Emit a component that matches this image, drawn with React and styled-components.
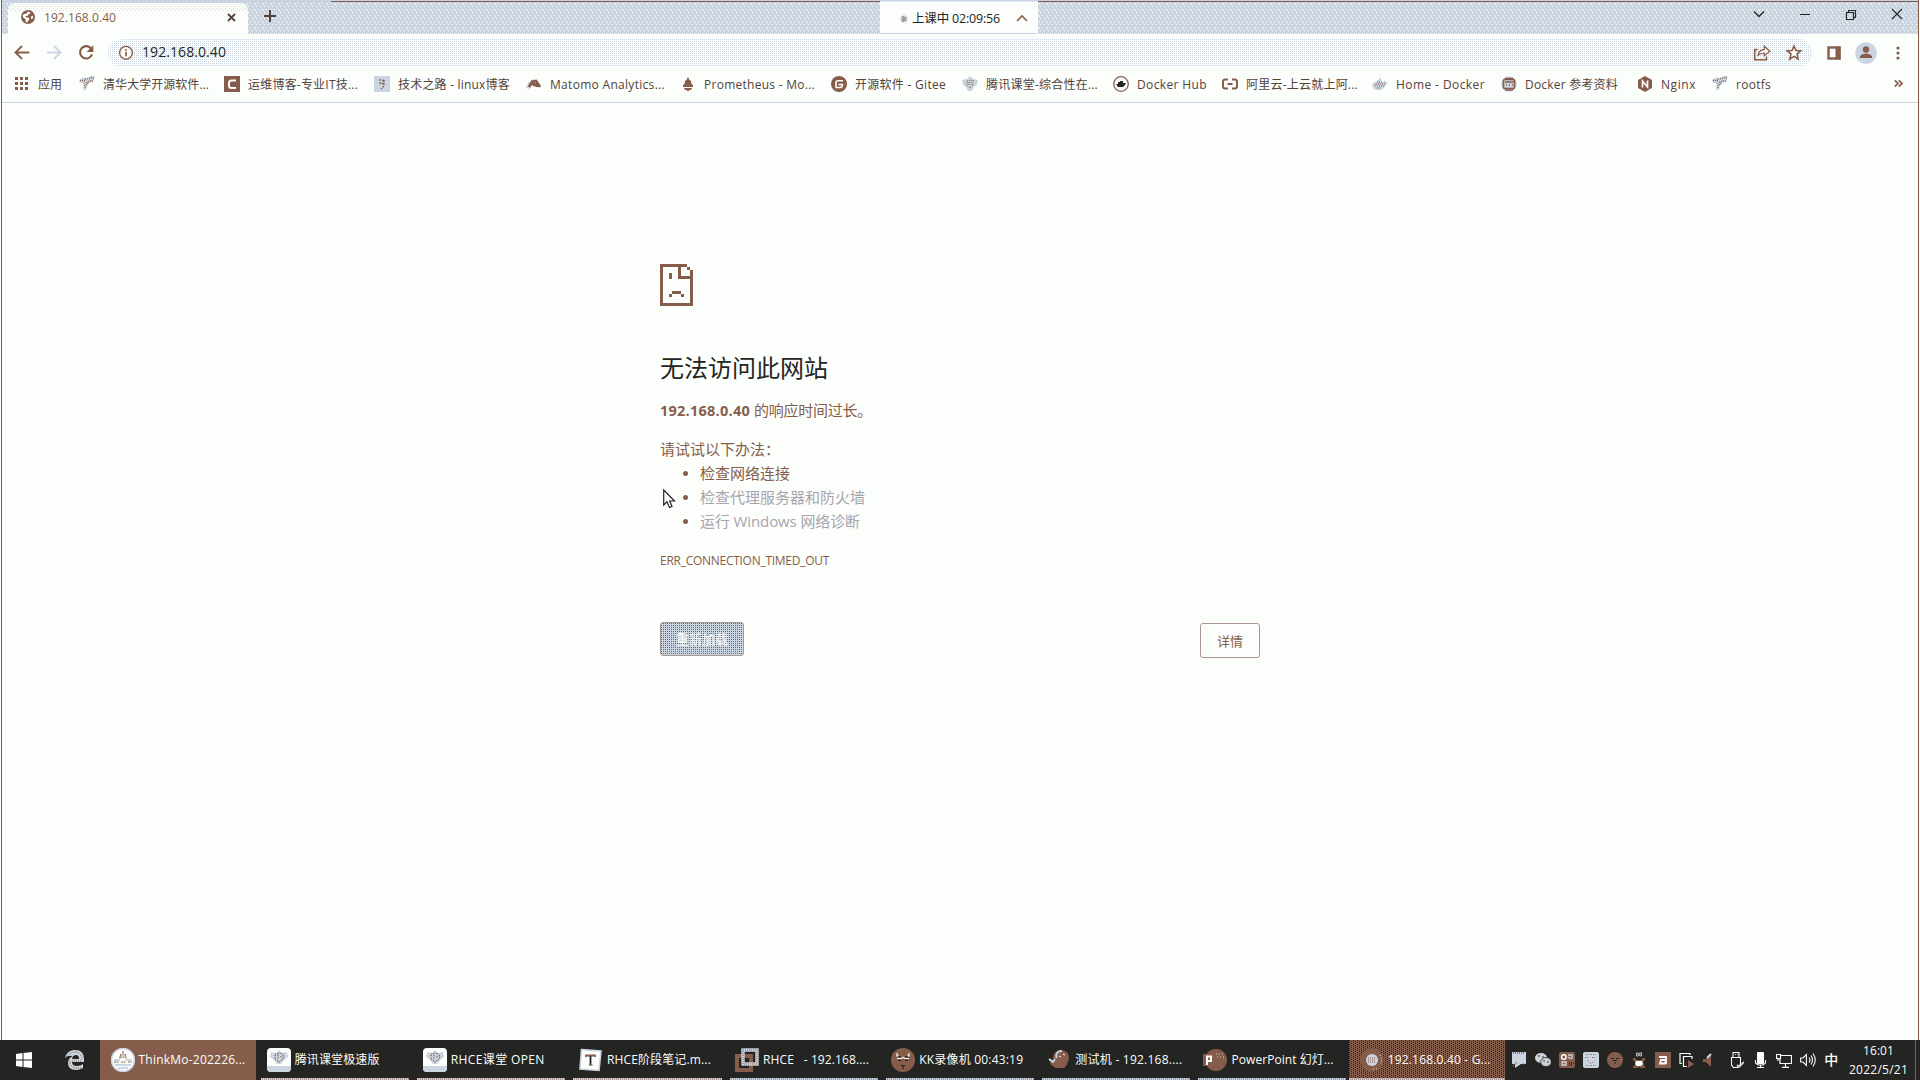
import React, { useLayoutEffect, useRef, useState } from 'react';
import styled, { createGlobalStyle, css } from 'styled-components';

const WHITE = '#fcfefb';
const BROWN = '#865d4a';
const BLUE = '#cbd5e2';
const INK = '#242522';

const dot = (color) => `conic-gradient(from 270deg at 1px 1px, ${color} 90deg, transparent 0)`;

const Global = createGlobalStyle`
  * { box-sizing: border-box; }
  html, body { margin: 0; overflow: hidden; background: ${WHITE}; }
  body { font-family: "Open Sans", "Noto Sans CJK SC", sans-serif; font-size: 12px; color: ${INK}; }
  svg { display: block; flex: none; }
`;

const center = css`display: flex; align-items: center;`;

const Screen = styled.div`
  width: 1920px;
  height: 1080px;
  display: flex;
  flex-direction: column;
`;

const BrowserWindow = styled.div`
  height: 1040px;
  margin: 0 1px;
  border-left: 1px solid ${BROWN};
  border-right: 1px solid ${BROWN};
  display: flex;
  flex-direction: column;
  background: ${WHITE};
`;

const TitleBar = styled.header`
  height: 34px;
  display: flex;
  align-items: stretch;
  border-top: 1px solid ${BLUE};
  background-color: ${BLUE};
  background-image: linear-gradient(90deg, ${BLUE} 329px, ${BROWN} 329px), ${dot(WHITE)}, ${dot(WHITE)}, ${dot(WHITE)};
  background-size: 100% 1px, 4px 6px, 4px 6px, 8px 6px;
  background-position: 0 0, 0 2px, 2px 5px, 5px 3px;
  background-repeat: no-repeat, repeat, repeat, repeat;
`;

const Tab = styled.div`
  ${center}
  width: 240px;
  margin: 2px 0 0 6px;
  padding: 0 12px 3px 12px;
  border-radius: 7px 7px 0 0;
  background-color: ${WHITE};
  background-image: linear-gradient(transparent 8px, ${WHITE} 8px), ${dot(BLUE)}, ${dot(BLUE)};
  background-size: 100% 100%, 4px 4px, 4px 4px;
  background-position: 0 0, 1px 1px, 3px 3px;
`;

const TabTitle = styled.span`
  flex: 1;
  padding-left: 8px;
  color: ${BROWN};
`;

const NewTab = styled.div`
  ${center}
  width: 46px;
  padding: 0 0 4px 15px;
`;

const ClassTimer = styled.div`
  ${center}
  width: 158px;
  margin-left: 586px;
  padding: 3px 8px 0 20px;
  background-color: ${WHITE};
  background-image: linear-gradient(90deg, ${BLUE} 50%, ${WHITE} 50%);
  background-size: 2px 1px;
  background-repeat: repeat-x;
  border-bottom: 1px solid ${BLUE};
  font-size: 12.5px;
`;

const TimerText = styled.div`
  width: 108px;
  padding-left: 4px;
  padding-bottom: 2px;
`;

const Controls = styled.div`
  ${center}
  margin-left: auto;
  gap: 30px;
  padding: 0 13px 8px 0;
`;

const Toolbar = styled.div`
  ${center}
  height: 38px;
  padding: 0 9px 0 11px;
`;

const NavButtons = styled.div`
  ${center}
  gap: 14px;
  width: 95px;
  padding-bottom: 1px;
`;

const AddressBar = styled.div`
  ${center}
  flex: 1;
  height: 28px;
  padding: 0 9px 1px 10px;
  border-radius: 14px;
  background-color: ${WHITE};
  background-image: ${dot(BLUE)};
  background-size: 2px 2px;
  font-size: 14px;
`;

const Url = styled.span`
  flex: 1;
  padding: 0 0 2px 8px;
`;

const AddressActions = styled.div`
  ${center}
  gap: 14px;
`;

const ToolbarActions = styled.div`
  ${center}
  gap: 12px;
  margin-left: 13px;
  padding-bottom: 1px;
`;

const BookmarkBar = styled.nav`
  ${center}
  height: 31px;
  padding: 0 15px 7px 12px;
  border-bottom: 1px solid ${BLUE};
`;

const Bookmark = styled.div`
  ${center}
  flex: none;
  gap: 8px;
  width: ${(p) => p.$slot}px;
  color: #54423a;
`;

const BookmarkLabel = styled.span`
  padding-top: 1px;
`;

const Spacer = styled.div`
  flex: 1;
`;

const Page = styled.main`
  flex: 1;
  width: 600px;
  margin: 0 0 0 658px;
  padding-top: 161px;
  color: ${BROWN};
  font-size: 15px;
`;

const Heading = styled.h1`
  margin: 44px 0 0;
  height: 36px;
  font-size: 24px;
  font-weight: 400;
  line-height: 36px;
  color: ${INK};
`;

const Summary = styled.p`
  margin: 12px 0 0;
  line-height: 24px;
  white-space: pre;
  b { font-size: 14.5px; }
`;

const Suggest = styled.div`
  margin-top: 14px;
  line-height: 24px;
`;

const Tips = styled.ul`
  margin: -1px 0 0;
  padding: 0;
  list-style: none;
`;

const Tip = styled.li`
  ${center}
  height: 24px;
  padding-left: 23px;
  color: ${(p) => (p.$link ? '#a8a4ad' : BROWN)};
  &::before {
    content: '';
    width: 5px;
    height: 5px;
    margin: 3px 12px 0 0;
    border-radius: 50%;
    background: ${BROWN};
  }
`;

const ErrorCode = styled.div`
  margin-top: 20px;
  height: 18px;
  font-size: 12px;
  line-height: 18px;
`;

const ButtonRow = styled.div`
  display: flex;
  justify-content: space-between;
  margin-top: 52px;
`;

const buttonBase = css`
  height: 34px;
  padding: 0 0 1px;
  border-radius: 3px;
  font: inherit;
  font-size: 13px;
`;

const ReloadButton = styled.button`
  ${buttonBase}
  width: 84px;
  border: 1px solid #a99992;
  color: ${WHITE};
  background-color: ${BLUE};
  background-image: ${dot(BROWN)};
  background-size: 2px 2px;
`;

const DetailsButton = styled.button`
  ${buttonBase}
  width: 60px;
  height: 35px;
  margin-top: 1px;
  border: 1px solid #a9968d;
  color: ${BROWN};
  background: ${WHITE};
`;

const Pointer = styled.div`
  position: absolute;
  left: 663px;
  top: 489px;
`;

const Taskbar = styled.footer`
  display: flex;
  height: 40px;
  background: ${INK};
  color: ${WHITE};
`;

const Launchers = styled.div`
  ${center}
  flex: none;
  width: 100px;
  padding-left: 16px;
  gap: 32px;
`;

const checker = css`
  background-color: ${BROWN};
  background-image: ${dot(INK)}, ${dot(INK)};
  background-size: 4px 2px, 4px 2px;
  background-position: 0 0, 2px 1px;
`;

const Task = styled.div`
  ${center}
  flex: none;
  position: relative;
  width: 156.15px;
  padding-left: 10.5px;
  gap: 4px;
  ${(p) => p.$state === 'group' && css`background: ${BROWN};`}
  ${(p) => p.$state === 'active' && checker}
  &::after {
    content: '';
    display: ${(p) => (p.$state === 'group' ? 'none' : 'block')};
    position: absolute;
    left: ${(p) => (p.$state === 'active' ? 0 : 5)}px;
    right: ${(p) => (p.$state === 'active' ? 0 : 3)}px;
    bottom: 0;
    height: 2px;
    background: linear-gradient(90deg, ${BLUE} 50%, #a99a98 50%) 0 0 / 2px 2px;
  }
`;

const TaskLabel = styled.span`
  padding-bottom: 2px;
`;

const Tray = styled.div`
  ${center}
  padding-left: 6px;
  gap: 8px;
`;

const SystemTray = styled.div`
  ${center}
  gap: 8px;
  margin-left: 1px;
`;

const Ime = styled.span`
  width: 14px;
  font-size: 14px;
  line-height: 18px;
  font-weight: 500;
`;

const Clock = styled.div`
  display: flex;
  flex-direction: column;
  align-items: center;
  justify-content: center;
  margin-left: auto;
  width: 74px;
  border-right: 1px solid ${BROWN};
  margin-right: 4px;
  line-height: 19px;
`;

const FitBox = styled.span`
  display: inline-block;
  white-space: pre;
`;

function Fit({ w, children }) {
  const ref = useRef(null);
  const [spacing, setSpacing] = useState(0);
  useLayoutEffect(() => {
    const natural = ref.current.getBoundingClientRect().width;
    const count = Array.from(ref.current.textContent).length;
    setSpacing((w - natural) / count);
  }, [w]);
  return <FitBox ref={ref} style={{ letterSpacing: `${spacing}px` }}>{children}</FitBox>;
}

function Icon({ size = 16, box = 16, children }) {
  return (
    <svg width={size} height={size} viewBox={`0 0 ${box} ${box}`} fill="none" stroke={BROWN} strokeWidth="1.6">
      {children}
    </svg>
  );
}

const Solid = ({ d, fill = BROWN }) => <path d={d} fill={fill} stroke="none" />;

const Globe = () => (
  <Icon size={16}>
    <circle cx="8" cy="8" r="7" fill={BROWN} stroke="none" />
    <Solid fill={WHITE} d="M8 2.6L10.5 3.4L9.8 5L8 5.6L7.6 7H5.6L6 8.4H8.6L9.4 10L8 12L7.6 13.4L5.6 12.8L5.8 10.6L3.4 8.8L2.6 7L4 4.8L6 5Z M11 7.4L13 6.8V8.6L12 10.4L10.8 9Z" />
  </Icon>
);

const Bird = () => (
  <Icon>
    <Solid fill={BLUE} d="M0 4L5 1L7 3L12 0H16L14 6L10 7L8 10L7 14H4L5 9L6 7L1 7Z" />
    <path d="M1 4.5H6M6 3L12 2M12 1L15 3M7 6.5L11 5H14M5 7L6 12M9 7L6 10" strokeDasharray="1 1" strokeWidth="1.3" />
  </Icon>
);

const bookmarkIcons = {
  apps: (
    <Icon>
      {[2, 7, 12].map((y) => [2, 7, 12].map((x) => (
        <rect key={`${x}-${y}`} x={x - 1} y={y - 1} width="3" height="3" fill={BROWN} stroke="none" />
      )))}
    </Icon>
  ),
  bird: <Bird />,
  c: <Icon><rect width="16" height="16" fill={BROWN} stroke="none" /><path d="M12 4.5H7.5Q5 4.5 5 7V9.5Q5 12 7.5 12H12" stroke={WHITE} strokeWidth="2" /></Icon>,
  road: <Icon><rect width="16" height="16" fill={BLUE} stroke="none" /><path d="M6 3V7Q7 9 9 7V3M10 4V10L7 13" strokeDasharray="2 1" strokeWidth="1.3" /></Icon>,
  matomo: <Icon><Solid fill={BLUE} d="M0 12L3 5L6 9L3 13Z" /><path d="M3 11L6 6L9 10M7 5.5L10 5L14 11M10 7L11 11" strokeWidth="2.8" /></Icon>,
  prometheus: <Icon><Solid d="M8 1L9.5 4L11 5L11.5 8L13 9V11H3V9L4.5 8L5 5L6.5 4Z M4 12H12L11 14H9V15H7V14H5Z" /></Icon>,
  gitee: <Icon><circle cx="8" cy="8" r="8" fill={BROWN} stroke="none" /><path d="M12 4.8H7Q5 4.8 5 7V11.5H9Q11.5 11.5 11.5 8.5H7.5" stroke={WHITE} strokeWidth="1.6" /></Icon>,
  tencent: <Icon><Solid fill={BLUE} d="M8 0L11 3L16 4L15 9L12 11L10 15H6L4 11L1 9L0 4L5 3Z" /><path d="M5 5L11 4V9L8 12L5 9ZM7 6V9M9 6V9" strokeWidth="1" strokeDasharray="1 1" /></Icon>,
  dockerhub: <Icon><circle cx="8" cy="8" r="7.3" strokeWidth="1.3" fill={WHITE} /><Solid fill={INK} d="M3 8H5V6H7V5H10V7H13L12 9L10 11H5Z" /></Icon>,
  aliyun: <Icon><path d="M6 3.5H3Q1 3.5 1 6V10Q1 12.5 3 12.5H6M10 3.5H13Q15 3.5 15 6V10Q15 12.5 13 12.5H10M5.5 8H10.5" strokeWidth="2" /></Icon>,
  whale: <Icon><Solid fill={BLUE} d="M0 8H2V6H5V4H7V2H9V6H12V4L14 6H16L14 9L12 12L8 14H4L1 12Z" /><path d="M2 8H13M3 10H12M5 6H10M5 12H9" strokeWidth="1" strokeDasharray="1 1" /></Icon>,
  dockerbook: <Icon><circle cx="8" cy="8" r="7.8" fill={BLUE} stroke="none" /><rect x="2.5" y="3.5" width="11" height="9" fill={BLUE} rx="1" /><path d="M4 2.4H12M4 14H12M4 6H13M5 9H6M8 9H9M11 9H12" strokeWidth="1.4" /></Icon>,
  nginx: <Icon><Solid d="M8 0L15 4V12L8 16L1 12V4Z" /><path d="M5.5 11.5V5L10.5 11V4.5" stroke={WHITE} strokeWidth="1.7" /></Icon>,
};

const bookmarks = [
  ['apps', 65, 24, '应用'],
  ['bird', 145, 106, '清华大学开源软件...'],
  ['c', 150, 110, '运维博客-专业IT技...'],
  ['road', 152, 112, '技术之路 - linux博客'],
  ['matomo', 154, 115, 'Matomo Analytics...'],
  ['prometheus', 151, 111, 'Prometheus - Mo...'],
  ['gitee', 131, 91, '开源软件 - Gitee'],
  ['tencent', 151, 112, '腾讯课堂-综合性在...'],
  ['dockerhub', 109, 70, 'Docker Hub'],
  ['aliyun', 150, 112, '阿里云-上云就上阿...'],
  ['whale', 129, 89, 'Home - Docker'],
  ['dockerbook', 136, 93, 'Docker 参考资料'],
  ['nginx', 75, 35, 'Nginx'],
  ['bird', 60, 35, 'rootfs'],
];

const Classroom = () => (
  <Icon size={24} box={24}>
    <rect width="24" height="24" rx="4" fill={WHITE} stroke="none" />
    <Solid fill={BLUE} d="M0 18H24V20Q24 24 20 24H4Q0 24 0 20Z" />
    <Solid fill={BLUE} d="M4 4L9 5L12 2L15 5L20 4L21 9L17 12L14 16H10L7 12L3 9Z" />
    <path d="M8 6L14 5L17 8L16 11L12 14L8 11Z M11 7V11M14 8V10" strokeWidth="1.2" strokeDasharray="1.2 1" />
  </Icon>
);

const taskIcons = {
  think: (
    <Icon size={24} box={24}>
      <circle cx="12" cy="12" r="11.5" fill={WHITE} stroke={BLUE} />
      <path d="M12 3V8M10 6L8 13M14 6L16 13M9 9H15M3 14H8M10 14H15M17 14H21" strokeWidth="1.2" strokeDasharray="2 0.6" />
      <path d="M3 12H9M15 12H21M4 17H20M7 20H17" stroke={BLUE} strokeWidth="1.8" />
    </Icon>
  ),
  classroom: <Classroom />,
  note: (
    <Icon size={24} box={24}>
      <path d="M2.5 1.5L22 3L20 22.5L1 21Z" fill={WHITE} stroke={BLUE} />
      <path d="M7 9V7.5H16V9" strokeWidth="1.8" />
      <path d="M11.5 8V17" stroke={INK} strokeWidth="1.8" />
      <path d="M10 17H13.5" strokeWidth="1.2" />
    </Icon>
  ),
  vm: (
    <Icon size={24} box={24}>
      <rect x="2" y="8" width="14" height="14" strokeWidth="4" />
      <rect x="8" y="2" width="14" height="14" stroke={BLUE} strokeWidth="3.4" />
      <rect x="8" y="2" width="14" height="14" strokeWidth="1" strokeDasharray="1 1" />
    </Icon>
  ),
  kk: (
    <Icon size={24} box={24}>
      <circle cx="12" cy="12" r="12" fill={BROWN} stroke="none" />
      <path d="M6 5V8H8M18 5V8H16M6 10.5H10L12 9.5L14 10.5H18" stroke={WHITE} strokeWidth="1.2" />
      <path d="M7 8.8H10M14 8.8H17M7 12.5H10M14 12.5H17M10 17.5H14M12 17V21" stroke={INK} strokeWidth="1.2" />
    </Icon>
  ),
  tester: (
    <Icon size={24} box={24}>
      <circle cx="14" cy="10" r="8" fill={BROWN} stroke="none" />
      <Solid d="M2 11L10 13L19 13L20 17L17 20H9L4 17Z" />
      <path d="M9.5 10Q8 3 15 3M2 11L6 14L8 11" stroke={BLUE} strokeWidth="1.8" />
      <path d="M12 8L14 9M16 6L18 7" stroke={WHITE} strokeWidth="1" />
    </Icon>
  ),
  ppt: (
    <Icon size={24} box={24}>
      <circle cx="13" cy="12" r="11" fill={BROWN} stroke="none" />
      <rect y="6" width="12" height="12" fill={BROWN} stroke="none" />
      <path d="M4 17V8.5H8V13H4" stroke={WHITE} strokeWidth="2" />
      <path d="M13 6H20M14 9H22" stroke={BLUE} strokeWidth="1" strokeDasharray="1 2" />
    </Icon>
  ),
  chrome: (
    <Icon size={24} box={24}>
      <circle cx="12" cy="12" r="11.5" fill={BROWN} stroke="none" />
      <circle cx="12" cy="12" r="6" fill={BLUE} stroke="none" />
      <path d="M8 10H16M8 12H16M8 14H16" strokeWidth="1" strokeDasharray="1 1" />
      <path d="M20 7L22 11L21 16M13 21H17" stroke={BLUE} strokeWidth="1" strokeDasharray="1 2" />
    </Icon>
  ),
};

const tasks = [
  ['think', 107, 'ThinkMo-202226...', 'group'],
  ['classroom', 85, '腾讯课堂极速版'],
  ['classroom', 94, 'RHCE课堂 OPEN'],
  ['note', 104, 'RHCE阶段笔记.m...'],
  ['vm', 106, 'RHCE   - 192.168....'],
  ['kk', 104, 'KK录像机 00:43:19'],
  ['tester', 107, '测试机 - 192.168....'],
  ['ppt', 102, 'PowerPoint 幻灯...'],
  ['chrome', 103, '192.168.0.40 - G...', 'active'],
];

const trayIcons = [
  <Icon key="chat"><Solid fill={BLUE} d="M1 0H15V12H10L4 16V12H1Z" /><path d="M2 1H14M2 14L6 10M12 12H14" strokeDasharray="1 1" /></Icon>,
  <Icon key="wechat"><ellipse cx="6" cy="6" rx="6" ry="5" fill={BLUE} stroke="none" /><ellipse cx="11" cy="10" rx="5.3" ry="4.5" fill={BLUE} stroke={INK} strokeWidth="0.8" /><path d="M3 4H5M7 5H9M8 9H10M12 10H14" strokeWidth="1.3" /></Icon>,
  <Icon key="shapes"><rect width="16" height="16" rx="2" fill={BROWN} stroke="none" /><circle cx="4.8" cy="5" r="2.3" stroke={WHITE} strokeWidth="1.4" /><path d="M9 3H13V7M3 10H7V13H3ZM9 5L12 7" stroke={BLUE} strokeWidth="1.3" /><path d="M10 11H15M10 13H14" stroke={INK} strokeDasharray="1 1" /></Icon>,
  <Icon key="class"><rect width="16" height="16" rx="2" fill={BLUE} stroke="none" /><path d="M3 2.5H13M2 5.5H6M9 5.5H13M4 8L8 12L12 8M3 13.5H13" strokeWidth="1" strokeDasharray="1 1.4" /></Icon>,
  <Icon key="kk"><circle cx="8" cy="8" r="8" fill={BROWN} stroke="none" /><path d="M4 6.5H7M9 6.5H12M6 8.5H10M8 10V12" stroke={INK} strokeWidth="1" /></Icon>,
  <Icon key="penguin"><Solid d="M2 6H4L6 8H10L12 6H14V8L12 10L13 13L14 15V16H10L8 15L6 16H2V15L4 13L4 10L2 8Z" /><Solid fill={WHITE} d="M5 9H11L12 12L10 14H6L4 12Z" /><path d="M5.5 1H7.3V4H5.5ZM8.7 1H10.5V4H8.7Z" stroke={BLUE} strokeWidth="0.9" /></Icon>,
  <Icon key="square"><rect width="16" height="16" fill={BROWN} stroke="none" /><path d="M4 5H11V12M5 11.5H10L11 8H6Z" stroke={WHITE} strokeWidth="1.8" /></Icon>,
  <Icon key="windows"><path d="M3 11.5H1V1.5H11V3M13 7V4.5H4.5V14.5H8" stroke={WHITE} strokeWidth="1.2" /><Solid d="M9 8L15 12L9 16Z" /></Icon>,
  <Icon key="mute"><Solid d="M0 7H3L8 2V15L3 10H0Z" /><path d="M4 6L8 2" stroke={BLUE} strokeWidth="2" /></Icon>,
];

const systemIcons = [
  <Icon key="usb"><path d="M5 5V0.5H11V5M3.5 5.5H12.5V12L10 15.5H5.5L3.5 13ZM7 2.5H7.8M9 2.5H9.8" stroke={WHITE} strokeWidth="1.1" /><path d="M9 13L11 15L16 10" stroke={BLUE} strokeWidth="1.8" /></Icon>,
  <Icon key="mic"><rect x="5" y="0" width="7" height="12" rx="1" fill={WHITE} stroke="none" /><path d="M3.5 8V11L6 13H11L13.5 11V8M8.5 13V16M5 15.5H12" stroke={WHITE} strokeWidth="1.1" /></Icon>,
  <Icon key="display"><path d="M5 3.5H15.5V11.5H4V7M9.5 12V15M6 15.3H13M0.5 2.5H4.5V6.5H0.5ZM2 6V9" stroke={WHITE} strokeWidth="1.2" /></Icon>,
  <Icon key="sound"><path d="M0.6 6H3L6.4 2.5V13.5L3 10H0.6ZM9 5.5Q11 8 9 10.5M11 3.5Q14 8 11 12.5M13 1.5Q17.5 8 13 14.5" stroke={WHITE} strokeWidth="1.1" /></Icon>,
];

export default function App() {
  return (
    <Screen>
      <Global />
      <BrowserWindow>
        <TitleBar>
          <Tab>
            <Globe />
            <TabTitle><Fit w={72}>192.168.0.40</Fit></TabTitle>
            <Icon size={9} box={9}><path d="M1 1L8 8M8 1L1 8" stroke="#54423a" strokeWidth="1.8" /></Icon>
          </Tab>
          <NewTab>
            <Icon size={14} box={14}><path d="M7 1V13M1 7H13" stroke="#54423a" strokeWidth="2" /></Icon>
          </NewTab>
          <ClassTimer>
            <Icon size={8} box={8}><circle cx="4" cy="4" r="3.8" fill={BLUE} stroke="none" /><path d="M3 1V7M5 2V6" strokeWidth="1" /></Icon>
            <TimerText><Fit w={88}>上课中 02:09:56</Fit></TimerText>
            <Icon size={12} box={12}><path d="M1 8L6 3L11 8" strokeWidth="1.6" /></Icon>
          </ClassTimer>
          <Controls>
            <Icon><path d="M3 5.5L8 10.5L13 5.5" stroke={INK} strokeWidth="1.3" /></Icon>
            <Icon><path d="M3 8.5H13" stroke={INK} strokeWidth="1" /></Icon>
            <Icon><path d="M3.5 6.5H10.5V13.5H3.5ZM5.5 6V4.5H12.5V11.5H11" stroke={INK} strokeWidth="1.2" /></Icon>
            <Icon><path d="M3 3L13 13M13 3L3 13" stroke={INK} strokeWidth="1.1" /></Icon>
          </Controls>
        </TitleBar>
        <Toolbar>
          <NavButtons>
            <Icon size={18}><path d="M14.5 7.5H2.5M8 1.8L2.2 7.5L8 13.2" strokeWidth="1.7" /></Icon>
            <Icon size={18}><path d="M1.5 7.5H13.5M8 1.8L13.8 7.5L8 13.2" stroke={BLUE} strokeWidth="1.7" /></Icon>
            <Icon size={18}><path d="M12.8 4.3A5.5 5.5 0 1 0 13.4 9.3" strokeWidth="1.9" /><Solid d="M14.5 1V7H8.5Z" /></Icon>
          </NavButtons>
          <AddressBar>
            <Icon><circle cx="8" cy="7.8" r="6.4" strokeWidth="1.4" fill={WHITE} /><path d="M8 7.1V11.3M8 4.3V5.9" strokeWidth="1.7" /></Icon>
            <Url><Fit w={84}>192.168.0.40</Fit></Url>
            <AddressActions>
              <Icon size={18}>
                <path d="M4 5H1.5V14H12V11" strokeWidth="1.4" />
                <path d="M4.5 10Q5 5.5 10 5V2L15 6.5L10 10.5V8Q7 8 4.5 10Z" strokeWidth="1.1" fill={WHITE} />
              </Icon>
              <Icon size={18}><path d="M8 1.8L9.7 5.8L14 6.2L10.7 9L11.7 13.3L8 11L4.3 13.3L5.3 9L2 6.2L6.3 5.8Z" strokeWidth="1.4" fill={WHITE} /></Icon>
            </AddressActions>
          </AddressBar>
          <ToolbarActions>
            <Icon size={18} box={18}><rect x="3.5" y="3.5" width="11" height="11" strokeWidth="2.4" /><path d="M13 2.5V15.5" strokeWidth="5" /></Icon>
            <Icon size={22} box={22}>
              <circle cx="11" cy="11" r="10.8" fill={BLUE} stroke="none" />
              <circle cx="11" cy="7.5" r="3.2" fill={BROWN} stroke="none" />
              <Solid d="M5 16V14Q7 11.5 11 11.5Q15 11.5 17 14V16Z" />
            </Icon>
            <Icon size={20} box={20}>{[5, 10, 15].map((y) => <circle key={y} cx="9" cy={y} r="1.6" fill={BROWN} stroke="none" />)}</Icon>
          </ToolbarActions>
        </Toolbar>
        <BookmarkBar>
          {bookmarks.map(([icon, slot, w, label]) => (
            <Bookmark key={label} $slot={slot}>
              {bookmarkIcons[icon]}
              <BookmarkLabel><Fit w={w}>{label}</Fit></BookmarkLabel>
            </Bookmark>
          ))}
          <Spacer />
          <Icon size={9} box={9}><path d="M0.8 1.3L4 4.5L0.8 7.7M4.8 1.3L8 4.5L4.8 7.7" strokeWidth="1.7" /></Icon>
        </BookmarkBar>
        <Page>
          <svg width="33" height="42" viewBox="0 0 11 14" shapeRendering="crispEdges">
            <path fill={BROWN} d="M0 0H9V1H10V2H11V14H0ZM1 1V13H10V5H6V1ZM7 1V4H10V2H9V1ZM3 3H4V5H3ZM4 9H7V10H4ZM3 10H4V11H3ZM7 10H8V11H7Z" fillRule="evenodd" />
          </svg>
          <Heading><Fit w={168}>无法访问此网站</Fit></Heading>
          <Summary><b><Fit w={90}>192.168.0.40</Fit></b> <Fit w={118}>的响应时间过长。</Fit></Summary>
          <Suggest>请试试以下办法：</Suggest>
          <Tips>
            <Tip>检查网络连接</Tip>
            <Tip $link>检查代理服务器和防火墙</Tip>
            <Tip $link><Fit w={160}>运行 Windows 网络诊断</Fit></Tip>
          </Tips>
          <ErrorCode><Fit w={169}>ERR_CONNECTION_TIMED_OUT</Fit></ErrorCode>
          <ButtonRow>
            <ReloadButton>重新加载</ReloadButton>
            <DetailsButton>详情</DetailsButton>
          </ButtonRow>
        </Page>
      </BrowserWindow>
      <Taskbar>
        <Launchers>
          <Icon><Solid fill={WHITE} d="M0 2L6.5 1V7.5H0ZM7.5 1L16 0V7.5H7.5ZM0 8.5H6.5V15L0 14ZM7.5 8.5H16V16L7.5 15Z" /></Icon>
          <Icon size={22} box={22}>
            <Solid fill={BLUE} d="M1 9Q3 1 11 1Q20 1 20 10V13H8Q8 17 13 17Q17 17 19 15V19Q16 21 12 21Q4 21 4 14Q4 9 9 7Q4 6 1 9ZM8 10H15Q15 6 12 6Q9 6 8 10Z" />
            <path d="M2 8Q6 3 12 3M12 3Q18 4 18 11M6 12Q5 18 12 19M12 19H18M8 12H18" strokeWidth="1" strokeDasharray="1 1" />
          </Icon>
        </Launchers>
        {tasks.map(([icon, w, label, state]) => (
          <Task key={label} $state={state}>
            {taskIcons[icon]}
            <TaskLabel><Fit w={w}>{label}</Fit></TaskLabel>
          </Task>
        ))}
        <Tray>
          {trayIcons}
          <SystemTray>
            {systemIcons}
            <Ime>中</Ime>
          </SystemTray>
        </Tray>
        <Clock>
          <Fit w={31}>16:01</Fit>
          <Fit w={59}>2022/5/21</Fit>
        </Clock>
      </Taskbar>
      <Pointer>
        <svg width="13" height="20" viewBox="0 0 13 20">
          <path d="M0.7 1V16L4 12.8L6.5 18.5L9 17.5L6.7 12H11.5Z" fill={WHITE} stroke={INK} strokeWidth="1.2" />
        </svg>
      </Pointer>
    </Screen>
  );
}
